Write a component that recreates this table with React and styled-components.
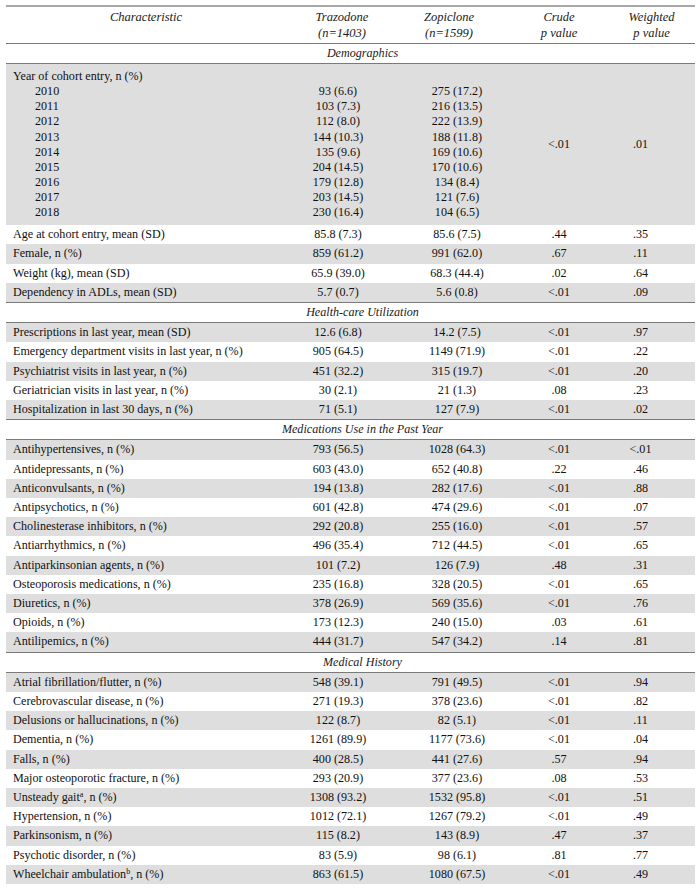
import styled, { createGlobalStyle } from "styled-components";

const GlobalStyle = createGlobalStyle`
  html, body {
    margin: 0;
    padding: 0;
    background: #fff;
  }
  body {
    font-family: "Liberation Serif", "Times New Roman", serif;
    color: #111;
  }
`;

const Page = styled.div`
  padding: 5px 5px 0 6px;
`;

const Table = styled.table`
  width: 689px;
  border-collapse: collapse;
  table-layout: fixed;
  font-size: 12.1px;
`;

const HeadRow = styled.tr`
  border-top: 2px solid #a8a8a8;
  border-bottom: 1px solid #7a7a7a;
`;

const HeadCell = styled.th`
  font-weight: normal;
  font-style: italic;
  font-size: 12.5px;
  line-height: 16px;
  text-align: center;
  vertical-align: top;
  padding: 2px ${({ $pr }) => $pr || 0}px 2px ${({ $pl }) => $pl || 0}px;
  color: #1a1a1a;
`;

const SectionRow = styled.tr`
  border-top: 1px solid #7a7a7a;
  border-bottom: 1px solid #7a7a7a;
`;

const SectionCell = styled.td`
  font-style: italic;
  text-align: center;
  line-height: 15.2px;
  padding: 2px 0 2px 24px;
  color: #1a1a1a;
`;

const Row = styled.tr`
  background: ${({ $shade }) => ($shade ? "#dedede" : "#fff")};
`;

const LabelCell = styled.td`
  text-align: left;
  line-height: 15.2px;
  padding: 2px 7px;
  white-space: nowrap;
`;

const ValueCell = styled.td`
  text-align: center;
  line-height: 15.2px;
  padding: 2px ${({ $pr }) => $pr || 0}px 2px ${({ $pl }) => $pl || 0}px;
  white-space: nowrap;
  vertical-align: middle;
`;

const BlockCell = styled.td`
  text-align: ${({ $left }) => ($left ? "left" : "center")};
  line-height: 15.1px;
  padding: 5px ${({ $pr }) => $pr || 0}px 5px ${({ $left, $pl }) => ($left ? 7 : $pl || 0)}px;
  vertical-align: ${({ $middle }) => ($middle ? "middle" : "top")};
  white-space: nowrap;
`;

const Line = styled.div`
  padding-left: ${({ $indent }) => ($indent ? 22 : 0)}px;
  height: 15.1px;
`;

const Sup = styled.sup`
  font-size: 8px;
  line-height: 0;
  vertical-align: 4px;
`;

const years = [
  ["2010", "93 (6.6)", "275 (17.2)"],
  ["2011", "103 (7.3)", "216 (13.5)"],
  ["2012", "112 (8.0)", "222 (13.9)"],
  ["2013", "144 (10.3)", "188 (11.8)"],
  ["2014", "135 (9.6)", "169 (10.6)"],
  ["2015", "204 (14.5)", "170 (10.6)"],
  ["2016", "179 (12.8)", "134 (8.4)"],
  ["2017", "203 (14.5)", "121 (7.6)"],
  ["2018", "230 (16.4)", "104 (6.5)"],
];

const sections = [
  {
    title: "Demographics",
    years: true,
    rows: [
      ["Age at cohort entry, mean (SD)", "85.8 (7.3)", "85.6 (7.5)", ".44", ".35"],
      ["Female, n (%)", "859 (61.2)", "991 (62.0)", ".67", ".11"],
      ["Weight (kg), mean (SD)", "65.9 (39.0)", "68.3 (44.4)", ".02", ".64"],
      ["Dependency in ADLs, mean (SD)", "5.7 (0.7)", "5.6 (0.8)", "<.01", ".09"],
    ],
  },
  {
    title: "Health-care Utilization",
    rows: [
      ["Prescriptions in last year, mean (SD)", "12.6 (6.8)", "14.2 (7.5)", "<.01", ".97"],
      ["Emergency department visits in last year, n (%)", "905 (64.5)", "1149 (71.9)", "<.01", ".22"],
      ["Psychiatrist visits in last year, n (%)", "451 (32.2)", "315 (19.7)", "<.01", ".20"],
      ["Geriatrician visits in last year, n (%)", "30 (2.1)", "21 (1.3)", ".08", ".23"],
      ["Hospitalization in last 30 days, n (%)", "71 (5.1)", "127 (7.9)", "<.01", ".02"],
    ],
  },
  {
    title: "Medications Use in the Past Year",
    rows: [
      ["Antihypertensives, n (%)", "793 (56.5)", "1028 (64.3)", "<.01", "<.01"],
      ["Antidepressants, n (%)", "603 (43.0)", "652 (40.8)", ".22", ".46"],
      ["Anticonvulsants, n (%)", "194 (13.8)", "282 (17.6)", "<.01", ".88"],
      ["Antipsychotics, n (%)", "601 (42.8)", "474 (29.6)", "<.01", ".07"],
      ["Cholinesterase inhibitors, n (%)", "292 (20.8)", "255 (16.0)", "<.01", ".57"],
      ["Antiarrhythmics, n (%)", "496 (35.4)", "712 (44.5)", "<.01", ".65"],
      ["Antiparkinsonian agents, n (%)", "101 (7.2)", "126 (7.9)", ".48", ".31"],
      ["Osteoporosis medications, n (%)", "235 (16.8)", "328 (20.5)", "<.01", ".65"],
      ["Diuretics, n (%)", "378 (26.9)", "569 (35.6)", "<.01", ".76"],
      ["Opioids, n (%)", "173 (12.3)", "240 (15.0)", ".03", ".61"],
      ["Antilipemics, n (%)", "444 (31.7)", "547 (34.2)", ".14", ".81"],
    ],
  },
  {
    title: "Medical History",
    rows: [
      ["Atrial fibrillation/flutter, n (%)", "548 (39.1)", "791 (49.5)", "<.01", ".94"],
      ["Cerebrovascular disease, n (%)", "271 (19.3)", "378 (23.6)", "<.01", ".82"],
      ["Delusions or hallucinations, n (%)", "122 (8.7)", "82 (5.1)", "<.01", ".11"],
      ["Dementia, n (%)", "1261 (89.9)", "1177 (73.6)", "<.01", ".04"],
      ["Falls, n (%)", "400 (28.5)", "441 (27.6)", ".57", ".94"],
      ["Major osteoporotic fracture, n (%)", "293 (20.9)", "377 (23.6)", ".08", ".53"],
      [<>Unsteady gait<Sup>a</Sup>, n (%)</>, "1308 (93.2)", "1532 (95.8)", "<.01", ".51"],
      ["Hypertension, n (%)", "1012 (72.1)", "1267 (79.2)", "<.01", ".49"],
      ["Parkinsonism, n (%)", "115 (8.2)", "143 (8.9)", ".47", ".37"],
      ["Psychotic disorder, n (%)", "83 (5.9)", "98 (6.1)", ".81", ".77"],
      [<>Wheelchair ambulation<Sup>b</Sup>, n (%)</>, "863 (61.5)", "1080 (67.5)", "<.01", ".49"],
    ],
  },
];

const YearBlock = () => (
  <Row $shade>
    <BlockCell $left>
      <Line>Year of cohort entry, n (%)</Line>
      {years.map((y) => (
        <Line $indent key={y[0]}>
          {y[0]}
        </Line>
      ))}
    </BlockCell>
    <BlockCell $pr={4}>
      <Line />
      {years.map((y) => (
        <Line key={y[0]}>{y[1]}</Line>
      ))}
    </BlockCell>
    <BlockCell $pl={4}>
      <Line />
      {years.map((y) => (
        <Line key={y[0]}>{y[2]}</Line>
      ))}
    </BlockCell>
    <BlockCell $middle>&lt;.01</BlockCell>
    <BlockCell $middle $pr={12}>
      .01
    </BlockCell>
  </Row>
);

const Section = ({ section }) => {
  const offset = section.years ? 1 : 0;
  return (
    <>
      <SectionRow>
        <SectionCell colSpan={5}>{section.title}</SectionCell>
      </SectionRow>
      {section.years && <YearBlock />}
      {section.rows.map((r, i) => (
        <Row key={i} $shade={(i + offset) % 2 === 0}>
          <LabelCell>{r[0]}</LabelCell>
          <ValueCell $pr={4}>{r[1]}</ValueCell>
          <ValueCell $pl={4}>{r[2]}</ValueCell>
          <ValueCell>{r[3]}</ValueCell>
          <ValueCell $pr={12}>{r[4]}</ValueCell>
        </Row>
      ))}
    </>
  );
};

const App = () => (
  <>
    <GlobalStyle />
    <Page>
      <Table>
        <colgroup>
          <col style={{ width: 284 }} />
          <col style={{ width: 100 }} />
          <col style={{ width: 130 }} />
          <col style={{ width: 78 }} />
          <col style={{ width: 97 }} />
        </colgroup>
        <thead>
          <HeadRow>
            <HeadCell $pr={4}>Characteristic</HeadCell>
            <HeadCell $pl={4}>
              Trazodone
              <br />
              (n=1403)
            </HeadCell>
            <HeadCell $pr={12}>
              Zopiclone
              <br />
              (n=1599)
            </HeadCell>
            <HeadCell>
              Crude
              <br />p value
            </HeadCell>
            <HeadCell $pl={10}>
              Weighted
              <br />p value
            </HeadCell>
          </HeadRow>
        </thead>
        <tbody>
          {sections.map((s) => (
            <Section key={s.title} section={s} />
          ))}
        </tbody>
      </Table>
    </Page>
  </>
);

export default App;
